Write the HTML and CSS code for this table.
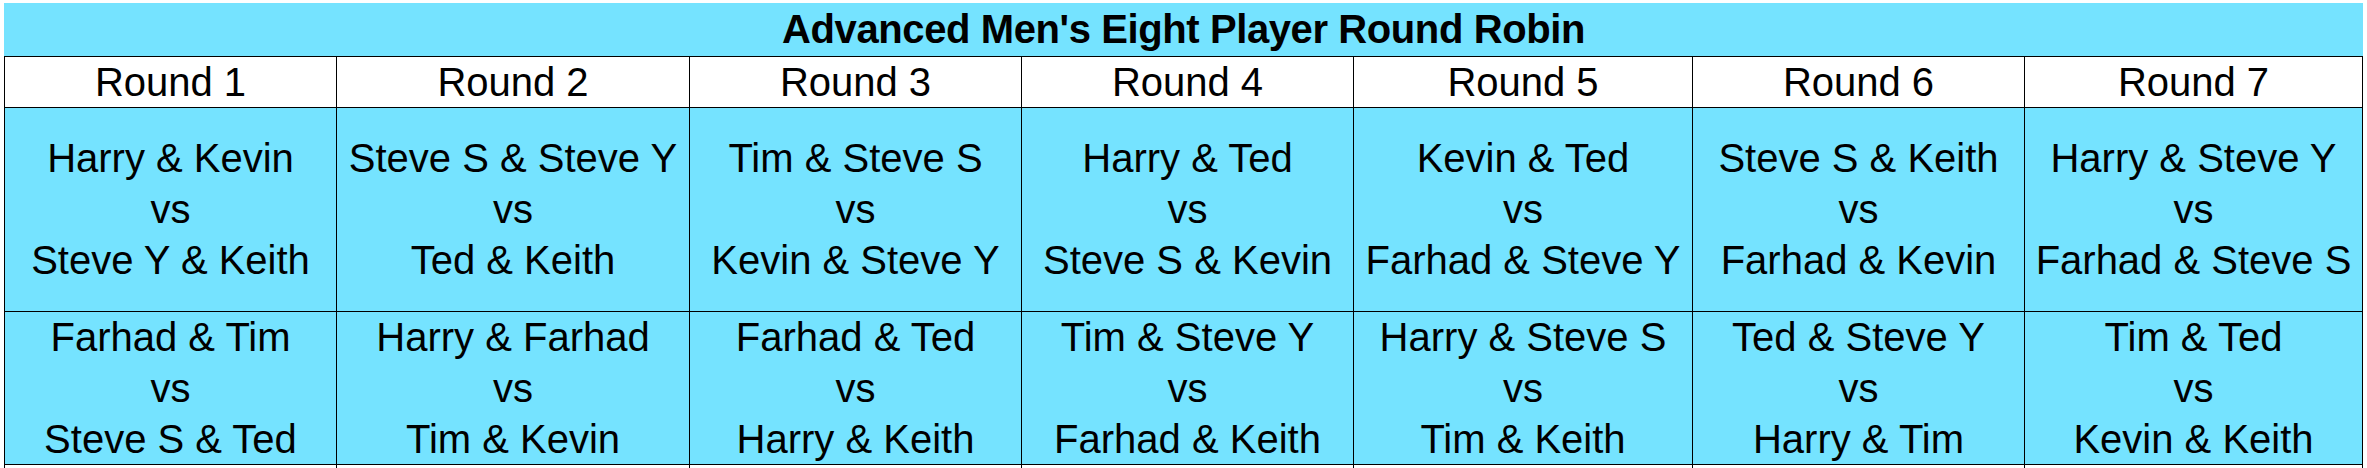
FILE: index.html
```html
<!DOCTYPE html>
<html>
<head>
<meta charset="utf-8">
<title>Advanced Men's Eight Player Round Robin</title>
<link rel="stylesheet" href="styles.css">
</head>
<body>
<div class="sheet">
  <div class="title">Advanced Men's Eight Player Round Robin</div>
  <div class="grid">
    <div class="cell head">Round 1</div>
    <div class="cell head">Round 2</div>
    <div class="cell head">Round 3</div>
    <div class="cell head">Round 4</div>
    <div class="cell head">Round 5</div>
    <div class="cell head">Round 6</div>
    <div class="cell head">Round 7</div>

    <div class="cell match"><span>Harry &amp; Kevin</span><span>vs</span><span>Steve Y &amp; Keith</span></div>
    <div class="cell match"><span>Steve S &amp; Steve Y</span><span>vs</span><span>Ted &amp; Keith</span></div>
    <div class="cell match"><span>Tim &amp; Steve S</span><span>vs</span><span>Kevin &amp; Steve Y</span></div>
    <div class="cell match"><span>Harry &amp; Ted</span><span>vs</span><span>Steve S &amp; Kevin</span></div>
    <div class="cell match"><span>Kevin &amp; Ted</span><span>vs</span><span>Farhad &amp; Steve Y</span></div>
    <div class="cell match"><span>Steve S &amp; Keith</span><span>vs</span><span>Farhad &amp; Kevin</span></div>
    <div class="cell match"><span>Harry &amp; Steve Y</span><span>vs</span><span>Farhad &amp; Steve S</span></div>

    <div class="cell match"><span>Farhad &amp; Tim</span><span>vs</span><span>Steve S &amp; Ted</span></div>
    <div class="cell match"><span>Harry &amp; Farhad</span><span>vs</span><span>Tim &amp; Kevin</span></div>
    <div class="cell match"><span>Farhad &amp; Ted</span><span>vs</span><span>Harry &amp; Keith</span></div>
    <div class="cell match"><span>Tim &amp; Steve Y</span><span>vs</span><span>Farhad &amp; Keith</span></div>
    <div class="cell match"><span>Harry &amp; Steve S</span><span>vs</span><span>Tim &amp; Keith</span></div>
    <div class="cell match"><span>Ted &amp; Steve Y</span><span>vs</span><span>Harry &amp; Tim</span></div>
    <div class="cell match"><span>Tim &amp; Ted</span><span>vs</span><span>Kevin &amp; Keith</span></div>

    <div class="cell blank"></div>
    <div class="cell blank"></div>
    <div class="cell blank"></div>
    <div class="cell blank"></div>
    <div class="cell blank"></div>
    <div class="cell blank"></div>
    <div class="cell blank"></div>
  </div>
</div>
</body>
</html>
```
FILE: styles.css
```css
html, body {
  margin: 0;
  padding: 0;
  background: #ffffff;
  overflow: hidden;
}

body {
  font-family: "Liberation Sans", Arial, sans-serif;
  color: #000000;
}

.sheet {
  margin: 3px 0 0 4px;
  width: 2359px;
}

.title {
  height: 53px;
  line-height: 53px;
  background: #75e3ff;
  text-align: center;
  font-weight: bold;
  font-size: 40px;
  letter-spacing: -0.4px;
  white-space: nowrap;
}

.grid {
  display: grid;
  grid-template-columns: 332px 353px 332px 332px 339px 332px 338px;
  grid-template-rows: 51px 204px 153px 3px;
  box-sizing: border-box;
  width: 2359px;
  border-top: 1px solid #000;
  border-left: 1px solid #000;
}

.cell {
  box-sizing: border-box;
  border-right: 1px solid #000;
  border-bottom: 1px solid #000;
  display: flex;
  flex-direction: column;
  justify-content: center;
  align-items: center;
  text-align: center;
  font-size: 40px;
  line-height: 51px;
  white-space: nowrap;
}

.head {
  background: #ffffff;
  line-height: 50px;
}

.match {
  background: #75e3ff;
}

.match span {
  display: block;
  height: 51px;
}

.blank {
  background: #ffffff;
  border-bottom: none;
}
```
